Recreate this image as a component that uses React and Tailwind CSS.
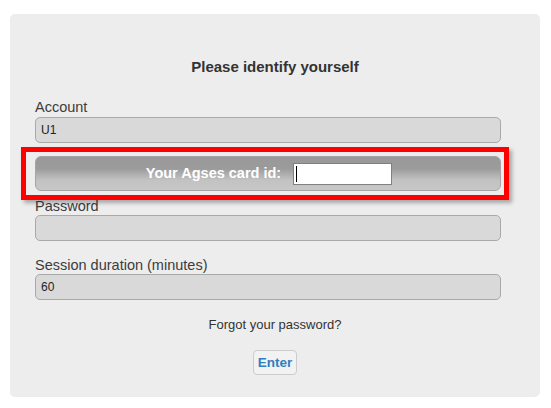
export default function App() {
  const font = { fontFamily: '"Liberation Sans", Arial, sans-serif' };
  return (
    <div className="w-[551px] h-[408px] bg-white overflow-hidden" style={font}>
      <div className="ml-[10px] mt-[14px] w-[530px] h-[383px] bg-[#ededed] rounded-[5px] pl-[25px] pr-[25px] pt-[44px]">
        <div className="text-center text-[15px] leading-[18px] font-bold text-[#333]">Please identify yourself</div>

        <div className="mt-[23px] text-[14.5px] leading-[16px] text-[#3c3c3c]">Account</div>
        <div className="mt-[2px] w-[466px] h-[26px] bg-[#d9d9d9] border border-[#a9a9a9] rounded-[5px] flex items-center pl-[5px] text-[12px] text-[#222]">U1</div>

        <div className="relative mt-[13px] w-[466px] h-[35px]">
          <div className="absolute left-[-14px] right-[-8px] top-[-9px] bottom-[-9px] border-[5px] border-[#ff0000] shadow-[3px_3px_4px_rgba(0,0,0,0.3)]"></div>
          <div className="relative w-full h-full rounded-[6px] border border-[#a5a5a5] bg-[linear-gradient(to_bottom,#999999_0%,#9b9b9b_35%,#c2c2c2_70%,#c8c8c8_100%)] flex items-center justify-center gap-[12px] pl-[2px]">
            <span className="text-[14.5px] font-bold text-white">Your Agses card id:</span>
            <div className="w-[99px] h-[22px] bg-white border border-[#808080] flex items-center pl-[2px]">
              <span className="block w-[1px] h-[16px] bg-black"></span>
            </div>
          </div>
        </div>

        <div className="mt-[7px] text-[14.5px] leading-[16px] text-[#3c3c3c]">Password</div>
        <div className="mt-[1px] w-[466px] h-[26px] bg-[#d9d9d9] border border-[#a9a9a9] rounded-[5px]"></div>

        <div className="mt-[16px] text-[14.5px] leading-[16px] text-[#3c3c3c]">Session duration (minutes)</div>
        <div className="mt-[1px] w-[466px] h-[26px] bg-[#d9d9d9] border border-[#a9a9a9] rounded-[5px] flex items-center pl-[5px] text-[12px] text-[#222]">60</div>

        <div className="mt-[17px] text-center text-[13px] leading-[15px] text-[#333]">Forgot your password?</div>
        <div className="mt-[18px] flex justify-center">
          <button className="h-[25px] px-[4px] rounded-[4px] border border-[#cccccc] bg-[#f2f2f2] text-[13.5px] font-bold text-[#2f7fc1] leading-none">Enter</button>
        </div>
      </div>
    </div>
  );
}
